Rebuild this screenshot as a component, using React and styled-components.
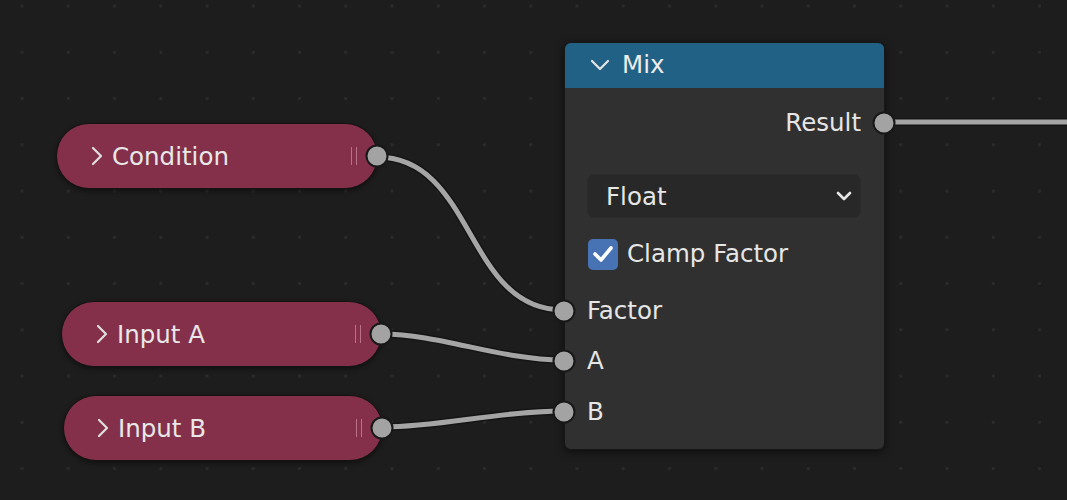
import React from 'react';
import styled, { createGlobalStyle } from 'styled-components';

const Global = createGlobalStyle`
    html, body {
        margin: 0;
        padding: 0;
        background: #1d1d1d;
    }
    body {
        font-family: "DejaVu Sans", "Liberation Sans", sans-serif;
    }
`

const Canvas = styled.div`
    position: relative;
    width: 1067px;
    height: 500px;
    overflow: hidden;
    background-color: #1d1d1d;
    background-image: radial-gradient(circle, #2c2c2c 1.2px, transparent 1.9px);
    background-size: 46.25px 46.25px;
    background-position: -1.1px -17.1px;
    color: #e6e6e6;
    font-size: 24.5px;
`

const Links = styled.svg`
    position: absolute;
    left: 0;
    top: 0;
    pointer-events: none;
`

// nodes sit on a free canvas, their place is the content
const Pill = styled.div`
    position: absolute;
    left: ${p => p.x}px;
    top: ${p => p.y}px;
    width: ${p => p.w}px;
    height: 66px;
    box-sizing: border-box;
    border-radius: 33px;
    background: #84304a;
    border: 1.5px solid #131313;
    box-shadow: 0 2px 5px rgba(0, 0, 0, 0.45);
    display: flex;
    align-items: center;
    padding-left: ${p => p.pad}px;
    gap: 9px;
`

const PillLabel = styled.span`
    flex: 1;
    color: #e8e8e8;
    line-height: 1;
    padding-top: 3px;
`

const Grip = styled.div`
    width: 4px;
    height: 18px;
    margin-right: 20px;
    border-left: 1px solid rgba(230, 170, 185, 0.55);
    border-right: 1px solid rgba(230, 170, 185, 0.55);
`

const Socket = styled.div`
    position: absolute;
    ${p => p.side}: 0;
    top: 50%;
    width: 19px;
    height: 19px;
    border-radius: 50%;
    background: #a3a3a3;
    border: 2px solid #181818;
    transform: translate(${p => (p.side === 'left' ? '-50%' : '50%')}, -50%);
`

const Node = styled.div`
    position: absolute;
    left: 564px;
    top: 42px;
    width: 321px;
    height: 408px;
    box-sizing: border-box;
    border-radius: 7px;
    background: #303030;
    border: 1px solid #171717;
    box-shadow: 0 2px 8px rgba(0, 0, 0, 0.55);
    display: flex;
    flex-direction: column;
`

const Header = styled.div`
    height: 45px;
    flex: none;
    background: #216185;
    border-radius: 6px 6px 0 0;
    display: flex;
    align-items: center;
    padding-left: 25px;
    padding-bottom: 2px;
    box-sizing: border-box;
    gap: 12px;
    color: #ececec;
`

const Body = styled.div`
    display: flex;
    flex-direction: column;
    padding: 10px 23px 0 22px;
`

const Row = styled.div`
    position: relative;
    height: ${p => p.h || 50}px;
    margin-top: ${p => p.mt || 0}px;
    display: flex;
    align-items: center;
    justify-content: ${p => (p.right ? 'flex-end' : 'flex-start')};
    line-height: 1;
`

const SocketEdge = styled.div`
    position: absolute;
    top: 0;
    bottom: 0;
    ${p => p.side}: ${p => (p.side === 'left' ? -23 : -23)}px;
    width: 0;
`

const Select = styled.div`
    height: 44px;
    margin-top: 26px;
    box-sizing: border-box;
    border-radius: 7px;
    background: #282828;
    border: 1px solid #2c2c2c;
    display: flex;
    align-items: center;
    justify-content: space-between;
    padding: 0 8px 0 18px;
`

const Check = styled.div`
    width: 30px;
    height: 31px;
    border-radius: 5px;
    background: #4772b3;
    display: flex;
    align-items: center;
    justify-content: center;
    margin-right: 9px;
    margin-left: 1px;
`

const ChevronRight = () => (
    <svg width="12" height="20" viewBox="0 0 12 20">
        <polyline points="2,2 10,10 2,18" fill="none" stroke="#e0e0e0" strokeWidth="2.2" strokeLinecap="round" strokeLinejoin="round" />
    </svg>
)

const ChevronDown = ({ w = 20, h = 12, sw = 2.2 }) => (
    <svg width={w} height={h} viewBox={`0 0 ${w} ${h}`}>
        <polyline points={`2,2 ${w / 2},${h - 2} ${w - 2},2`} fill="none" stroke="#e6e6e6" strokeWidth={sw} strokeLinecap="round" strokeLinejoin="round" />
    </svg>
)

const links = [
    'M377 157 C 475 157, 465 310, 563 310',
    'M382 334 C 440 334, 500 360, 563 360',
    'M383 427 C 440 427, 500 411, 563 411',
    'M886 122 L 1080 122',
]

const pills = [
    { label: 'Condition', x: 56, y: 123, w: 322, pad: 34 },
    { label: 'Input A', x: 61, y: 301, w: 321, pad: 34 },
    { label: 'Input B', x: 63, y: 395, w: 320, pad: 33 },
]

const App = () => {
    return (
        <>
            <Global />
            <Canvas>
                <Links width="1067" height="500" viewBox="0 0 1067 500">
                    {links.map((d, i) => (
                        <path key={'o' + i} d={d} fill="none" stroke="#151515" strokeWidth="8" />
                    ))}
                    {links.map((d, i) => (
                        <path key={'l' + i} d={d} fill="none" stroke="#a5a5a5" strokeWidth="5" />
                    ))}
                </Links>

                {pills.map(p => (
                    <Pill key={p.label} x={p.x} y={p.y} w={p.w} pad={p.pad}>
                        <ChevronRight />
                        <PillLabel>{p.label}</PillLabel>
                        <Grip />
                        <Socket side="right" />
                    </Pill>
                ))}

                <Node>
                    <Header>
                        <ChevronDown />
                        <span>Mix</span>
                    </Header>
                    <Body>
                        <Row right>
                            Result
                            <SocketEdge side="right"><Socket side="left" /></SocketEdge>
                        </Row>
                        <Select>
                            <span>Float</span>
                            <ChevronDown w={16} h={10} sw={2.6} />
                        </Select>
                        <Row h={36} mt={18}>
                            <Check>
                                <svg width="22" height="20" viewBox="0 0 22 20">
                                    <polyline points="3,10 9,16 19,4" fill="none" stroke="#ffffff" strokeWidth="3.6" strokeLinecap="round" strokeLinejoin="round" />
                                </svg>
                            </Check>
                            Clamp Factor
                        </Row>
                        <Row mt={14}>
                            Factor
                            <SocketEdge side="left"><Socket side="left" /></SocketEdge>
                        </Row>
                        <Row>
                            A
                            <SocketEdge side="left"><Socket side="left" /></SocketEdge>
                        </Row>
                        <Row h={52}>
                            B
                            <SocketEdge side="left"><Socket side="left" /></SocketEdge>
                        </Row>
                    </Body>
                </Node>
            </Canvas>
        </>
    );
};

export default App;
